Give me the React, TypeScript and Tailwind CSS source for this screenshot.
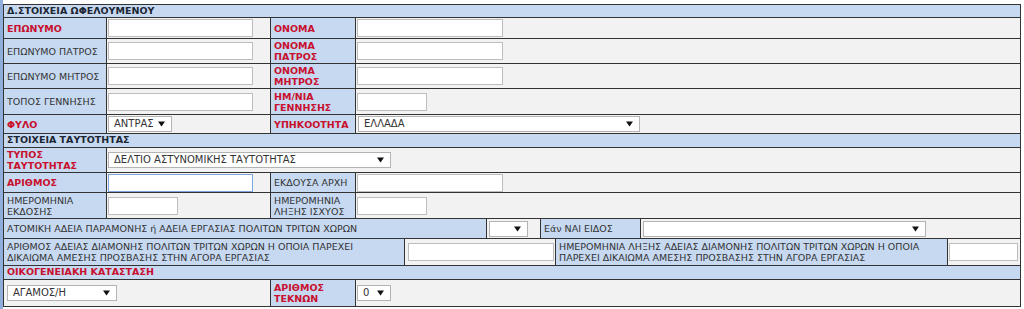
import React from "react";

const BLUE = "bg-[#c6d9f1]";
const GRAY = "bg-[#f2f2f2]";

function Arrow() {
  return (
    <svg width="7" height="6" viewBox="0 0 7 6" className="shrink-0">
      <polygon points="0,0.5 7,0.5 3.5,5.5" fill="#111" />
    </svg>
  );
}

function Sel({ cls, text }: { cls: string; text?: string }) {
  return (
    <div
      className={`h-[16px] bg-white border border-[#b3b3b3] flex items-center justify-between pl-[5px] pr-[6px] text-[#333] text-[10px] leading-none ${cls}`}
    >
      <span>{text ?? ""}</span>
      <Arrow />
    </div>
  );
}

function Inp({ cls }: { cls: string }) {
  return <div className={`h-[18px] bg-white border border-[#bdbdbd] ${cls}`} />;
}

function Lab({
  children,
  red,
  cls,
}: {
  children: React.ReactNode;
  red?: boolean;
  cls: string;
}) {
  return (
    <div
      className={`${BLUE} border-r border-[#333] flex items-center pl-[3px] leading-[11px] ${
        red ? "text-[#c8102e] font-bold" : "text-[#333]"
      } ${cls}`}
    >
      <div>{children}</div>
    </div>
  );
}

function Cell({ children, cls }: { children?: React.ReactNode; cls: string }) {
  return <div className={`${GRAY} border-r border-[#333] flex items-center ${cls}`}>{children}</div>;
}

function Header({ children, red, h }: { children: React.ReactNode; red?: boolean; h: string }) {
  return (
    <div
      className={`${BLUE} border-b border-[#333] flex items-center pl-[3px] font-bold ${
        red ? "text-[#c8102e]" : "text-[#1c2633]"
      } ${h}`}
    >
      {children}
    </div>
  );
}

function Row({ children, h }: { children: React.ReactNode; h: string }) {
  return <div className={`flex border-b border-[#333] ${h}`}>{children}</div>;
}

export default function App() {
  return (
    <div className="w-[1024px] h-[309px] bg-white flex font-['DejaVu_Sans','Liberation_Sans',sans-serif] text-[9.5px] overflow-hidden">
      <div className="w-[3px] h-full bg-[#8faedb]" />
      <div className="pt-[4px]">
        <div className="w-[1018px] border-t border-l border-r border-[#333]">
          <Header h="h-[13px]">Δ.ΣΤΟΙΧΕΙΑ ΩΦΕΛΟΥΜΕΝΟΥ</Header>

          <Row h="h-[21px]">
            <Lab red cls="w-[103px]">ΕΠΩΝΥΜΟ</Lab>
            <Cell cls="w-[164px]">
              <Inp cls="ml-[1px] w-[145px]" />
            </Cell>
            <Lab red cls="w-[85px]">ΟΝΟΜΑ</Lab>
            <div className={`${GRAY} flex-1 flex items-center`}>
              <Inp cls="ml-[1px] w-[146px]" />
            </div>
          </Row>

          <Row h="h-[25px]">
            <Lab cls="w-[103px]">ΕΠΩΝΥΜΟ ΠΑΤΡΟΣ</Lab>
            <Cell cls="w-[164px]">
              <Inp cls="ml-[1px] w-[145px]" />
            </Cell>
            <Lab red cls="w-[85px]">
              ΟΝΟΜΑ
              <br />
              ΠΑΤΡΟΣ
            </Lab>
            <div className={`${GRAY} flex-1 flex items-center`}>
              <Inp cls="ml-[1px] w-[146px]" />
            </div>
          </Row>

          <Row h="h-[25px]">
            <Lab cls="w-[103px]">ΕΠΩΝΥΜΟ ΜΗΤΡΟΣ</Lab>
            <Cell cls="w-[164px]">
              <Inp cls="ml-[1px] w-[145px]" />
            </Cell>
            <Lab red cls="w-[85px]">
              ΟΝΟΜΑ
              <br />
              ΜΗΤΡΟΣ
            </Lab>
            <div className={`${GRAY} flex-1 flex items-center`}>
              <Inp cls="ml-[1px] w-[146px]" />
            </div>
          </Row>

          <Row h="h-[26px]">
            <Lab cls="w-[103px]">ΤΟΠΟΣ ΓΕΝΝΗΣΗΣ</Lab>
            <Cell cls="w-[164px]">
              <Inp cls="ml-[1px] w-[145px]" />
            </Cell>
            <Lab red cls="w-[85px]">
              ΗΜ/ΝΙΑ
              <br />
              ΓΕΝΝΗΣΗΣ
            </Lab>
            <div className={`${GRAY} flex-1 flex items-center`}>
              <Inp cls="ml-[1px] w-[70px]" />
            </div>
          </Row>

          <Row h="h-[19px]">
            <Lab red cls="w-[103px]">ΦΥΛΟ</Lab>
            <Cell cls="w-[164px]">
              <Sel cls="ml-[1px] w-[64px]" text="ΑΝΤΡΑΣ" />
            </Cell>
            <Lab red cls="w-[85px]">ΥΠΗΚΟΟΤΗΤΑ</Lab>
            <div className={`${GRAY} flex-1 flex items-center`}>
              <Sel cls="ml-[2px] w-[282px]" text="ΕΛΛΑΔΑ" />
            </div>
          </Row>

          <Header h="h-[14px]">ΣΤΟΙΧΕΙΑ ΤΑΥΤΟΤΗΤΑΣ</Header>

          <Row h="h-[25px]">
            <Lab red cls="w-[103px]">
              ΤΥΠΟΣ
              <br />
              ΤΑΥΤΟΤΗΤΑΣ
            </Lab>
            <div className={`${GRAY} flex-1 flex items-center`}>
              <Sel cls="ml-[1px] w-[283px]" text="ΔΕΛΤΙΟ ΑΣΤΥΝΟΜΙΚΗΣ ΤΑΥΤΟΤΗΤΑΣ" />
            </div>
          </Row>

          <Row h="h-[20px]">
            <Lab red cls="w-[103px]">ΑΡΙΘΜΟΣ</Lab>
            <Cell cls="w-[164px]">
              <div className="ml-[1px] w-[145px] h-[18px] bg-white border border-[#7ea6dc]" />
            </Cell>
            <Lab cls="w-[85px]">ΕΚΔΟΥΣΑ ΑΡΧΗ</Lab>
            <div className={`${GRAY} flex-1 flex items-center`}>
              <Inp cls="ml-[1px] w-[146px]" />
            </div>
          </Row>

          <Row h="h-[26px]">
            <Lab cls="w-[103px]">
              ΗΜΕΡΟΜΗΝΙΑ
              <br />
              ΕΚΔΟΣΗΣ
            </Lab>
            <Cell cls="w-[164px]">
              <Inp cls="ml-[1px] w-[70px]" />
            </Cell>
            <Lab cls="w-[85px]">
              ΗΜΕΡΟΜΗΝΙΑ
              <br />
              ΛΗΞΗΣ ΙΣΧΥΟΣ
            </Lab>
            <div className={`${GRAY} flex-1 flex items-center`}>
              <Inp cls="ml-[1px] w-[70px]" />
            </div>
          </Row>

          <Row h="h-[20px]">
            <Lab cls="w-[483px]">ΑΤΟΜΙΚΗ ΑΔΕΙΑ ΠΑΡΑΜΟΝΗΣ ή ΑΔΕΙΑ ΕΡΓΑΣΙΑΣ ΠΟΛΙΤΩΝ ΤΡΙΤΩΝ ΧΩΡΩΝ</Lab>
            <Cell cls="w-[54px]">
              <Sel cls="ml-[2px] w-[39px]" />
            </Cell>
            <Lab cls="w-[100px]">Εάν ΝΑΙ ΕΙΔΟΣ</Lab>
            <div className={`${GRAY} flex-1 flex items-center`}>
              <Sel cls="ml-[2px] w-[283px]" />
            </div>
          </Row>

          <Row h="h-[27px]">
            <Lab cls="w-[401px]">
              ΑΡΙΘΜΟΣ ΑΔΕΙΑΣ ΔΙΑΜΟΝΗΣ ΠΟΛΙΤΩΝ ΤΡΙΤΩΝ ΧΩΡΩΝ Η ΟΠΟΙΑ ΠΑΡΕΧΕΙ
              <br />
              ΔΙΚΑΙΩΜΑ ΑΜΕΣΗΣ ΠΡΟΣΒΑΣΗΣ ΣΤΗΝ ΑΓΟΡΑ ΕΡΓΑΣΙΑΣ
            </Lab>
            <Cell cls="w-[151px]">
              <Inp cls="ml-[3px] w-[146px]" />
            </Cell>
            <Lab cls="w-[392px]">
              ΗΜΕΡΟΜΗΝΙΑ ΛΗΞΗΣ ΑΔΕΙΑΣ ΔΙΑΜΟΝΗΣ ΠΟΛΙΤΩΝ ΤΡΙΤΩΝ ΧΩΡΩΝ Η ΟΠΟΙΑ
              <br />
              ΠΑΡΕΧΕΙ ΔΙΚΑΙΩΜΑ ΑΜΕΣΗΣ ΠΡΟΣΒΑΣΗΣ ΣΤΗΝ ΑΓΟΡΑ ΕΡΓΑΣΙΑΣ
            </Lab>
            <div className={`${GRAY} flex-1 flex items-center`}>
              <Inp cls="ml-[1px] w-[69px]" />
            </div>
          </Row>

          <Header red h="h-[14px]">ΟΙΚΟΓΕΝΕΙΑΚΗ ΚΑΤΑΣΤΑΣΗ</Header>

          <Row h="h-[27px]">
            <Cell cls="w-[267px]">
              <Sel cls="ml-[3px] w-[110px]" text="ΑΓΑΜΟΣ/Η" />
            </Cell>
            <Lab red cls="w-[85px]">
              ΑΡΙΘΜΟΣ
              <br />
              ΤΕΚΝΩΝ
            </Lab>
            <div className={`${GRAY} flex-1 flex items-center`}>
              <Sel cls="ml-[1px] w-[34px]" text="0" />
            </div>
          </Row>
        </div>
      </div>
    </div>
  );
}
